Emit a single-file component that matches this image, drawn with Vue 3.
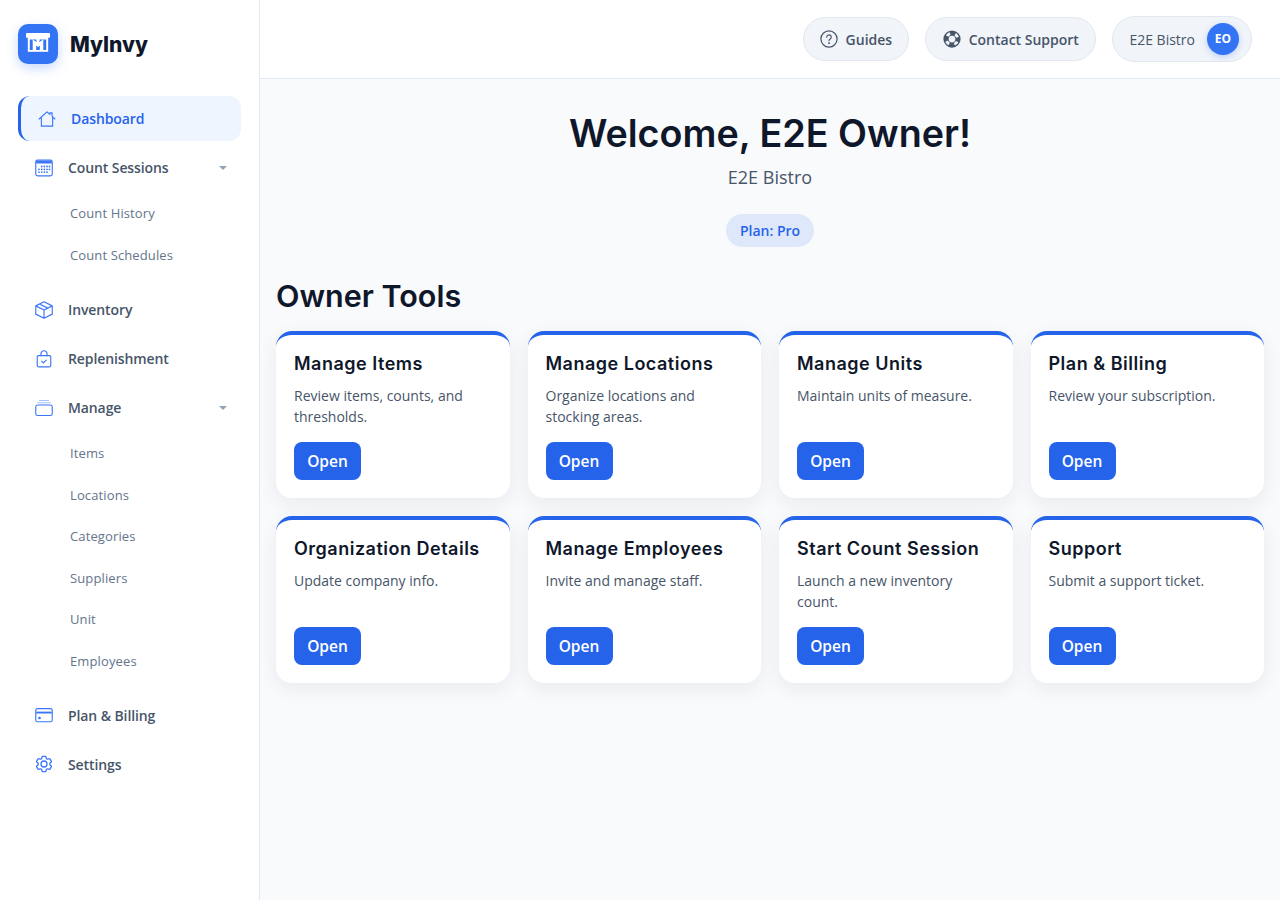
<script setup>
const tools = [
  { title: 'Manage Items', text: 'Review items, counts, and thresholds.' },
  { title: 'Manage Locations', text: 'Organize locations and stocking areas.' },
  { title: 'Manage Units', text: 'Maintain units of measure.' },
  { title: 'Plan & Billing', text: 'Review your subscription.' },
  { title: 'Organization Details', text: 'Update company info.' },
  { title: 'Manage Employees', text: 'Invite and manage staff.' },
  { title: 'Start Count Session', text: 'Launch a new inventory count.' },
  { title: 'Support', text: 'Submit a support ticket.' },
]

const countLinks = ['Count History', 'Count Schedules']
const manageLinks = ['Items', 'Locations', 'Categories', 'Suppliers', 'Unit', 'Employees']
</script>

<template>
  <div class="app-shell">
    <aside class="sidebar">
      <div class="brand">
        <div class="brand-logo">
          <svg viewBox="0 0 40 40" width="40" height="40">
            <rect x="8" y="9" width="24" height="4.800" rx="1" fill="#fff" />
            <path d="M9.800 13h20.400v14.800H9.800z" fill="#fff" />
            <path d="M11.800 15.500h2.900v10.500h-2.900zM25.300 15.500h2.900v10.500h-2.900zM18.200 21.500l1.800 1.500 1.800-1.500v4.500h-3.600zM14.700 15.500h3.600l.4 2.500zM25.300 15.500h-3.600l-.4 2.500z" fill="#3274f4" />
          </svg>
        </div>
        <span class="brand-name">MyInvy</span>
      </div>

      <nav class="nav">
        <a class="nav-item active">
          <svg class="nav-icon" viewBox="0 0 24 24">
            <path d="M1.500 12 12 2.500l3.800 3.400V3.800h3v4.800L22.500 12M4.500 9.500v12h15v-12" />
          </svg>
          <span>Dashboard</span>
        </a>

        <a class="nav-item">
          <svg class="nav-icon" viewBox="0 0 24 24">
            <rect x="1" y="1.500" width="22" height="21" rx="2.500" />
            <path class="fill" d="M1.500 2.500h21v3.500h-21z" />
            <g class="dots">
              <circle cx="9" cy="10" r="1.200" /><circle cx="12.500" cy="10" r="1.200" /><circle cx="16" cy="10" r="1.200" /><circle cx="19.300" cy="10" r="1.200" />
              <circle cx="5.300" cy="13.700" r="1.200" /><circle cx="9" cy="13.700" r="1.200" /><circle cx="12.500" cy="13.700" r="1.200" /><circle cx="16" cy="13.700" r="1.200" /><circle cx="19.300" cy="13.700" r="1.200" />
              <circle cx="5.300" cy="17.400" r="1.200" /><circle cx="9" cy="17.400" r="1.200" /><circle cx="12.500" cy="17.400" r="1.200" /><circle cx="16" cy="17.400" r="1.200" />
            </g>
          </svg>
          <span>Count Sessions</span>
          <i class="caret"></i>
        </a>
        <div class="sub-list">
          <a v-for="link in countLinks" :key="link" class="sub-item">{{ link }}</a>
        </div>

        <a class="nav-item">
          <svg class="nav-icon" viewBox="0 0 24 24">
            <path d="M23 6.500 12 1 1 6.500m22 0L12 12m11-5.500v11L12 23M1 6.500 12 12M1 6.500v11L12 23m0-11v11M6 4l11 5.500" />
          </svg>
          <span>Inventory</span>
        </a>

        <a class="nav-item">
          <svg class="nav-icon" viewBox="0 0 24 24">
            <path d="M4.500 7.500h15a1.500 1.500 0 0 1 1.500 1.500v11.500a2 2 0 0 1-2 2H5a2 2 0 0 1-2-2V9a1.500 1.500 0 0 1 1.500-1.500z" />
            <path d="M8 7.500V5a4 4 0 0 1 8 0v2.500M9 15l2.200 2.200 3.800-3.800" />
          </svg>
          <span>Replenishment</span>
        </a>

        <a class="nav-item">
          <svg class="nav-icon" viewBox="0 0 24 24">
            <rect x="1" y="8" width="22" height="14" rx="2.500" />
            <path class="soft" d="M3.500 5h17M6 2h12" />
          </svg>
          <span>Manage</span>
          <i class="caret"></i>
        </a>
        <div class="sub-list manage-list">
          <a v-for="link in manageLinks" :key="link" class="sub-item">{{ link }}</a>
        </div>

        <a class="nav-item">
          <svg class="nav-icon" viewBox="0 0 24 24">
            <rect x="1" y="3.500" width="22" height="17.500" rx="2.500" />
            <path class="fill" d="M1.500 7.500h21v2.500h-21z" />
            <circle class="fill" cx="6" cy="16" r="1.800" />
          </svg>
          <span>Plan &amp; Billing</span>
        </a>

        <a class="nav-item">
          <svg class="nav-icon" viewBox="1.500 1.500 21 21">
            <path d="M9.594 3.940c.09-.542.56-.94 1.110-.94h2.593c.55 0 1.020.398 1.110.94l.213 1.281c.063.374.313.686.645.87.074.04.147.083.22.127.324.196.72.257 1.075.124l1.217-.456a1.125 1.125 0 011.370.49l1.296 2.247a1.125 1.125 0 01-.26 1.431l-1.003.827c-.293.24-.438.613-.431.992a6.759 6.759 0 010 .255c-.007.378.138.75.43.99l1.005.828c.424.35.534.954.26 1.430l-1.298 2.247a1.125 1.125 0 01-1.369.491l-1.217-.456c-.355-.133-.75-.072-1.076.124a6.570 6.570 0 01-.22.128c-.331.183-.581.495-.644.869l-.213 1.280c-.09.543-.56.941-1.110.941h-2.594c-.55 0-1.020-.398-1.110-.94l-.213-1.281c-.062-.374-.312-.686-.644-.87a6.520 6.520 0 01-.22-.127c-.325-.196-.72-.257-1.076-.124l-1.217.456a1.125 1.125 0 01-1.369-.49l-1.297-2.247a1.125 1.125 0 01.26-1.431l1.004-.827c.292-.24.437-.613.43-.992a6.932 6.932 0 010-.255c.007-.378-.138-.75-.43-.99l-1.004-.828a1.125 1.125 0 01-.26-1.430l1.297-2.247a1.125 1.125 0 011.370-.491l1.216.456c.356.133.751.072 1.076-.124.072-.044.146-.087.22-.128.332-.183.582-.495.644-.869l.214-1.281z" />
            <circle cx="12" cy="12" r="3.500" />
          </svg>
          <span>Settings</span>
        </a>
      </nav>
    </aside>

    <div class="content">
      <header class="topbar">
        <button class="pill">
          <svg class="pill-icon" viewBox="0 0 24 24" fill="none" stroke="currentColor" stroke-width="1.600" stroke-linecap="round">
            <circle cx="12" cy="12" r="10.800" />
            <path d="M9 9.500a3 3 0 1 1 4.600 2.500c-1 .65-1.600 1.200-1.600 2.300" />
            <circle cx="12" cy="17.500" r="0.500" />
          </svg>
          Guides
        </button>
        <button class="pill pill-wide">
          <svg class="pill-icon" viewBox="0 0 24 24">
            <path fill="currentColor" fill-rule="evenodd" d="M12 .5a11.500 11.500 0 1 0 0 23 11.500 11.500 0 0 0 0-23zm0 7a4.500 4.500 0 1 0 0 9 4.500 4.500 0 0 0 0-9z" />
            <circle class="ring-gaps" cx="12" cy="12" r="7.700" />
          </svg>
          Contact Support
        </button>
        <div class="org-pill">
          <span>E2E Bistro</span>
          <span class="avatar">EO</span>
        </div>
      </header>

      <main class="main">
        <section class="welcome">
          <h1>Welcome, E2E Owner!</h1>
          <p>E2E Bistro</p>
          <span class="plan-badge">Plan: Pro</span>
        </section>

        <h2 class="section-title">Owner Tools</h2>
        <div class="tool-grid">
          <div v-for="tool in tools" :key="tool.title" class="tool-card">
            <h3>{{ tool.title }}</h3>
            <p>{{ tool.text }}</p>
            <button class="open-btn">Open</button>
          </div>
        </div>
      </main>
    </div>
  </div>
</template>

<style scoped>
.app-shell {
  display: flex;
  min-height: 900px;
  font-family: "Open Sans", "Liberation Sans", sans-serif;
  color: #0f172a;
}

.sidebar {
  width: 260px;
  flex-shrink: 0;
  box-sizing: border-box;
  padding: 24px 18px 0;
  background: #fff;
  border-right: 1px solid #e2e8f0;
}

.brand {
  display: flex;
  align-items: center;
  gap: 12px;
  height: 40px;
  margin-bottom: 32px;
}

.brand-logo {
  width: 40px;
  height: 40px;
  border-radius: 10px;
  background: #3274f4;
  box-shadow: 0 4px 12px rgba(37, 99, 235, 0.25);
}

.brand-logo svg {
  display: block;
}

.brand-name {
  font-family: Inter, sans-serif;
  font-size: 21px;
  font-weight: 800;
  color: #0f172a;
}

.nav-item {
  display: flex;
  align-items: center;
  gap: 15px;
  height: 45px;
  margin-bottom: 4px;
  padding: 0 12px 0 17px;
  box-sizing: border-box;
  border-radius: 12px;
  font-size: 14px;
  font-weight: 600;
  letter-spacing: -0.1px;
  color: #475569;
}

.nav-item.active {
  border-left: 3px solid #2563eb;
  background: #eff5ff;
  color: #2563eb;
}

.nav-icon {
  width: 18px;
  height: 18px;
  flex-shrink: 0;
  fill: none;
  stroke: #3b76f6;
  stroke-width: 1.500;
  stroke-linecap: round;
  stroke-linejoin: round;
}

.nav-icon .fill,
.nav-icon .dots {
  fill: #3b76f6;
  stroke: none;
}

.nav-icon .soft {
  stroke: #a5c2fb;
}

.caret {
  margin-left: auto;
  margin-right: 2px;
  border-left: 4px solid transparent;
  border-right: 4px solid transparent;
  border-top: 4px solid #94a3b8;
}

.sub-list {
  display: flex;
  flex-direction: column;
  margin: -1.800px 0 12px;
}

.sub-list.manage-list {
  margin: -2.100px 0 11px;
}

.sub-item {
  display: flex;
  align-items: center;
  height: 41.600px;
  padding-left: 52px;
  font-size: 13px;
  font-weight: 500;
  letter-spacing: 0.12px;
  color: #64748b;
}

.content {
  flex: 1;
  min-width: 0;
  display: flex;
  flex-direction: column;
  background: #f9fafc;
}

.topbar {
  display: flex;
  align-items: center;
  justify-content: flex-end;
  gap: 16px;
  height: 79px;
  box-sizing: border-box;
  padding: 0 28px 1px 0;
  background: #fff;
  border-bottom: 1px solid #e2e8f0;
}

.pill {
  display: flex;
  align-items: center;
  gap: 8px;
  height: 44px;
  padding: 1px 16px 0;
  box-sizing: border-box;
  border: 1px solid #e2e8f0;
  border-radius: 22px;
  background: #f1f4f9;
  font-family: inherit;
  font-size: 14px;
  font-weight: 600;
  color: #475569;
}

.pill-wide {
  padding: 1px 16.500px 0;
}

.pill-icon {
  width: 18px;
  height: 18px;
}

.ring-gaps {
  fill: none;
  stroke: #f1f4f9;
  stroke-width: 3.800;
  stroke-dasharray: 5 7.100;
  stroke-dashoffset: -3.550;
}

.org-pill {
  display: flex;
  align-items: center;
  gap: 12px;
  height: 46px;
  padding: 0 12px 0 16px;
  box-sizing: border-box;
  border: 1px solid #e2e8f0;
  border-radius: 23px;
  background: #f1f4f9;
  font-size: 14px;
  font-weight: 500;
  color: #475569;
}

.org-pill > span:first-child {
  padding-top: 1px;
}

.avatar {
  display: flex;
  align-items: center;
  justify-content: center;
  width: 32px;
  height: 32px;
  border-radius: 50%;
  background: #3274f4;
  box-shadow: 0 2px 6px rgba(37, 99, 235, 0.25);
  font-size: 12px;
  font-weight: 700;
  color: #fff;
}

.main {
  padding: 0 16px;
}

.welcome {
  display: flex;
  flex-direction: column;
  align-items: center;
  padding-top: 28px;
}

.welcome h1 {
  margin: 0;
  font-family: Inter, sans-serif;
  font-size: 37.700px;
  line-height: 52px;
  font-weight: 600;
  color: #0f172a;
}

.welcome p {
  margin: 5px 0 0;
  font-size: 18px;
  line-height: 26px;
  color: #475569;
}

.plan-badge {
  display: flex;
  align-items: center;
  height: 33px;
  margin-top: 24px;
  padding: 0 14px;
  border-radius: 17px;
  background: #dfe8fa;
  font-size: 14px;
  font-weight: 600;
  color: #2563eb;
}

.section-title {
  margin: 28px 0 14px;
  font-family: Inter, sans-serif;
  font-size: 30.500px;
  line-height: 42px;
  font-weight: 600;
  color: #0f172a;
}

.tool-grid {
  display: grid;
  grid-template-columns: repeat(4, 1fr);
  gap: 18px;
}

.tool-card {
  display: flex;
  flex-direction: column;
  align-items: flex-start;
  padding: 18px;
  border-top: 4px solid #2563eb;
  border-radius: 16px;
  background: #fff;
  box-shadow: 0 6px 20px rgba(15, 23, 42, 0.07);
}

.tool-card h3 {
  margin: 0 0 10px;
  font-family: Inter, sans-serif;
  font-size: 18px;
  line-height: 22px;
  font-weight: 600;
  letter-spacing: 0.5px;
  color: #0f172a;
}

.tool-card p {
  margin: 0 0 15px;
  min-height: 42px;
  font-size: 14px;
  line-height: 21px;
  color: #475569;
}

.open-btn {
  height: 38px;
  width: 67px;
  padding: 0;
  border: none;
  border-radius: 8px;
  background: #2563eb;
  font-family: inherit;
  font-size: 15.500px;
  font-weight: 600;
  color: #fff;
}
</style>
